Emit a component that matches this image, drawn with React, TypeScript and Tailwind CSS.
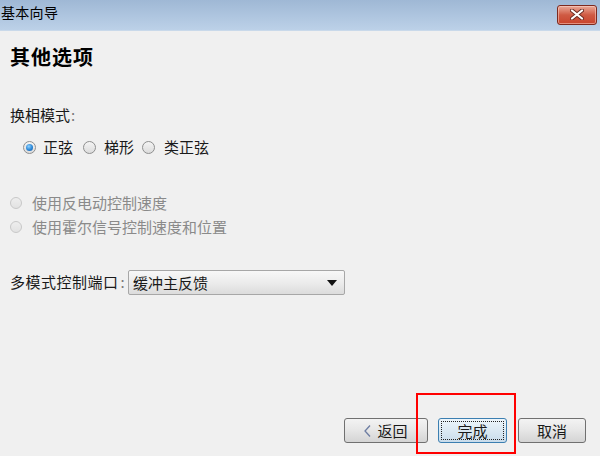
import React from "react";

const font = { fontFamily: '"Noto Sans CJK SC", "Noto Sans", sans-serif' };

function Radio({ checked, disabled }: { checked?: boolean; disabled?: boolean }) {
  if (disabled) {
    return (
      <span className="w-[12px] h-[12px] rounded-full border border-[#c8c8c8] bg-gradient-to-b from-[#eeeeee] to-[#e2e2e2] shrink-0" />
    );
  }
  return (
    <span className="w-[13px] h-[13px] rounded-full border border-[#8e8f8f] bg-gradient-to-b from-[#f4f4f4] to-[#dcdcdc] shrink-0 flex items-center justify-center">
      {checked && (
        <span className="w-[7px] h-[7px] rounded-full bg-[radial-gradient(circle_at_40%_35%,#8fd2ff_0%,#2a86d6_55%,#1b5aa0_100%)]" />
      )}
    </span>
  );
}

export default function App() {
  return (
    <div className="w-[600px] h-[465px] flex flex-col bg-white overflow-hidden text-[#1a1a1a]" style={font}>
      {/* title bar */}
      <div className="h-[31px] shrink-0 flex items-center justify-between pl-[1px] pr-[3px] bg-gradient-to-b from-[#9fb8d5] to-[#bcd1e8] border-b border-[#c9d9ea]">
        <span className="text-[14px] leading-none text-black mt-[-6px] tracking-[0.3px]">基本向导</span>
        <div className="w-[40px] h-[20px] mt-[-1px] rounded-[3px] border border-[#7d2a1f] bg-gradient-to-b from-[#e9a898] via-[#cf5a43] to-[#c8432c] flex items-center justify-center shadow-[inset_0_0_0_1px_rgba(255,220,210,0.5)]">
          <svg width="14" height="11" viewBox="0 0 14 11">
            <path d="M2 1.5 L12 9.5 M12 1.5 L2 9.5" stroke="#6a2a22" strokeWidth="4" strokeLinecap="round" />
            <path d="M2 1.5 L12 9.5 M12 1.5 L2 9.5" stroke="#ffffff" strokeWidth="2.2" strokeLinecap="round" />
          </svg>
        </div>
      </div>

      {/* body */}
      <div className="flex-1 bg-[#f0f0f0] flex flex-col pl-[10px] pr-[14px]">
        <div className="mt-[12px] text-[20px] leading-[28px] font-bold tracking-[1px] text-black">其他选项</div>

        <div className="mt-[34px] text-[15px] leading-[20px]">
          换相模式<span className="text-[#777] ml-[1px]">:</span>
        </div>

        <div className="mt-[12px] h-[20px] flex items-center text-[15px] leading-[20px] pl-[13px]">
          <Radio checked />
          <span className="ml-[7px]">正弦</span>
          <span className="ml-[10px]"><Radio /></span>
          <span className="ml-[8px]">梯形</span>
          <span className="ml-[8px]"><Radio /></span>
          <span className="ml-[9px]">类正弦</span>
        </div>

        <div className="mt-[36px] h-[20px] flex items-center text-[15px] leading-[20px] text-[#8a8a8a]">
          <Radio disabled />
          <span className="ml-[10px]">使用反电动控制速度</span>
        </div>
        <div className="mt-[4px] h-[20px] flex items-center text-[15px] leading-[20px] text-[#8a8a8a]">
          <Radio disabled />
          <span className="ml-[10px]">使用霍尔信号控制速度和位置</span>
        </div>

        <div className="mt-[33px] h-[25px] flex items-center text-[15px]">
          <span className="w-[118px] tracking-[0.5px]">多模式控制端口<span className="text-[#777] ml-[2px]">:</span></span>
          <div className="w-[217px] h-[25px] rounded-[2px] border border-[#a7a7a7] bg-gradient-to-b from-[#f8f8f8] via-[#ececec] to-[#dcdcdc] flex items-center justify-between pl-[4px] pr-[7px]">
            <span className="leading-none">缓冲主反馈</span>
            <svg width="10" height="6" viewBox="0 0 10 6">
              <path d="M0 0 H10 L5 6 Z" fill="#111" />
            </svg>
          </div>
        </div>

        <div className="mt-auto mb-[13px] flex justify-end relative">
          <button className="w-[84px] h-[25px] rounded-[3px] border border-[#707070] bg-gradient-to-b from-[#f3f3f3] via-[#e6e6e6] to-[#d4d4d4] flex items-center justify-center text-[15px] leading-none">
            <svg width="7" height="12" viewBox="0 0 7 12" className="mr-[6px]">
              <path d="M6 0.5 L1 6 L6 11.5" stroke="#6d7da2" strokeWidth="1.3" fill="none" />
            </svg>
            返回
          </button>
          <button className="ml-[10px] w-[69px] h-[25px] rounded-[3px] border border-[#3c7fb1] bg-gradient-to-b from-[#eef6fb] via-[#dbe9f3] to-[#c9dceb] p-[2px] text-[15px] leading-none">
            <span className="w-full h-full flex items-center justify-center border border-dotted border-[#222]">完成</span>
          </button>
          <button className="ml-[11px] w-[68px] h-[25px] rounded-[3px] border border-[#707070] bg-gradient-to-b from-[#f3f3f3] via-[#e6e6e6] to-[#d4d4d4] flex items-center justify-center text-[15px] leading-none">
            取消
          </button>
          <div className="absolute left-[406px] top-[-25px] w-[100px] h-[61px] border-2 border-[#ff0000] pointer-events-none" />
        </div>
      </div>
      <div className="h-[9px] shrink-0 bg-white" />
    </div>
  );
}
